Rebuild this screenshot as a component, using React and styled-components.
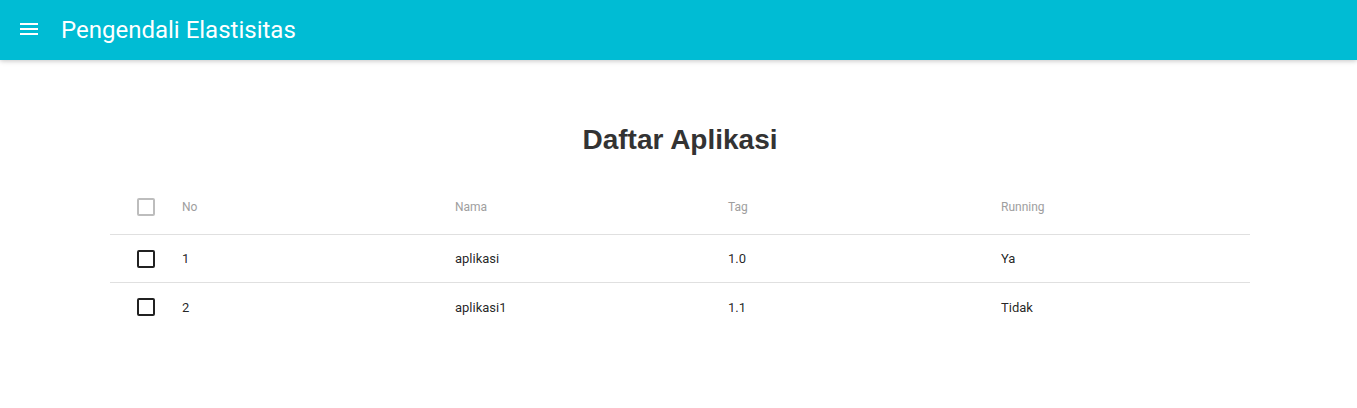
import React from 'react';
import styled, { createGlobalStyle } from 'styled-components';

const GlobalStyle = createGlobalStyle`
  body {
    margin: 0;
    background: #fff;
    font-family: Roboto, "Liberation Sans", sans-serif;
  }
`

const AppBar = styled.header`
  display: flex;
  align-items: center;
  height: 60px;
  padding: 0 17px;
  background-color: #00bcd4;
  box-shadow: 0 1px 6px rgba(0, 0, 0, 0.12), 0 1px 4px rgba(0, 0, 0, 0.12);
  position: relative;
  z-index: 1;
`

const MenuButton = styled.svg`
  width: 24px;
  height: 24px;
  fill: #fff;
  margin-right: 20px;
  margin-top: -2px;
`

const Title = styled.h1`
  margin: 0;
  font-size: 24px;
  font-weight: 400;
  color: #fff;
  margin-top: -1px;
`

const Main = styled.main`
  width: 1140px;
  margin-left: calc(50% - 568.5px);
  padding-top: 64px;
`

const Heading = styled.h2`
  margin: 0 0 24px;
  text-align: center;
  font-family: "Liberation Sans", Arial, sans-serif;
  font-size: 28px;
  line-height: 31px;
  font-weight: 700;
  color: #333;
`

const Row = styled.div`
  display: grid;
  grid-template-columns: 72px 273px 273px 273px 1fr;
  align-items: center;
  height: ${p => (p.head ? 56 : 48)}px;
  border-bottom: ${p => (p.last ? 'none' : '1px solid #e0e0e0')};
  box-sizing: border-box;
`

const Cell = styled.div`
  font-size: ${p => (p.head ? 12 : 13)}px;
  color: ${p => (p.head ? '#9e9e9e' : 'rgba(0, 0, 0, 0.87)')};
`

const CheckCell = styled.div`
  padding-left: 27px;
  display: flex;
  align-items: center;
`

const Box = styled.span`
  width: 18px;
  height: 18px;
  box-sizing: border-box;
  border: 2px solid ${p => (p.muted ? '#bdbdbd' : '#212121')};
  border-radius: 2px;
`

const apps = [
  { no: 1, nama: 'aplikasi', tag: '1.0', running: 'Ya' },
  { no: 2, nama: 'aplikasi1', tag: '1.1', running: 'Tidak' },
]

export default function App() {
  return (
    <>
      <GlobalStyle />
      <AppBar>
        <MenuButton viewBox="0 0 24 24">
          <path d="M3 18h18v-2H3v2zm0-5h18v-2H3v2zm0-7v2h18V6H3z" />
        </MenuButton>
        <Title>Pengendali Elastisitas</Title>
      </AppBar>
      <Main>
        <Heading>Daftar Aplikasi</Heading>
        <Row head>
          <CheckCell><Box muted /></CheckCell>
          <Cell head>No</Cell>
          <Cell head>Nama</Cell>
          <Cell head>Tag</Cell>
          <Cell head>Running</Cell>
        </Row>
        {apps.map((a, i) => (
          <Row key={a.no} last={i === apps.length - 1}>
            <CheckCell><Box /></CheckCell>
            <Cell>{a.no}</Cell>
            <Cell>{a.nama}</Cell>
            <Cell>{a.tag}</Cell>
            <Cell>{a.running}</Cell>
          </Row>
        ))}
      </Main>
    </>
  );
}
